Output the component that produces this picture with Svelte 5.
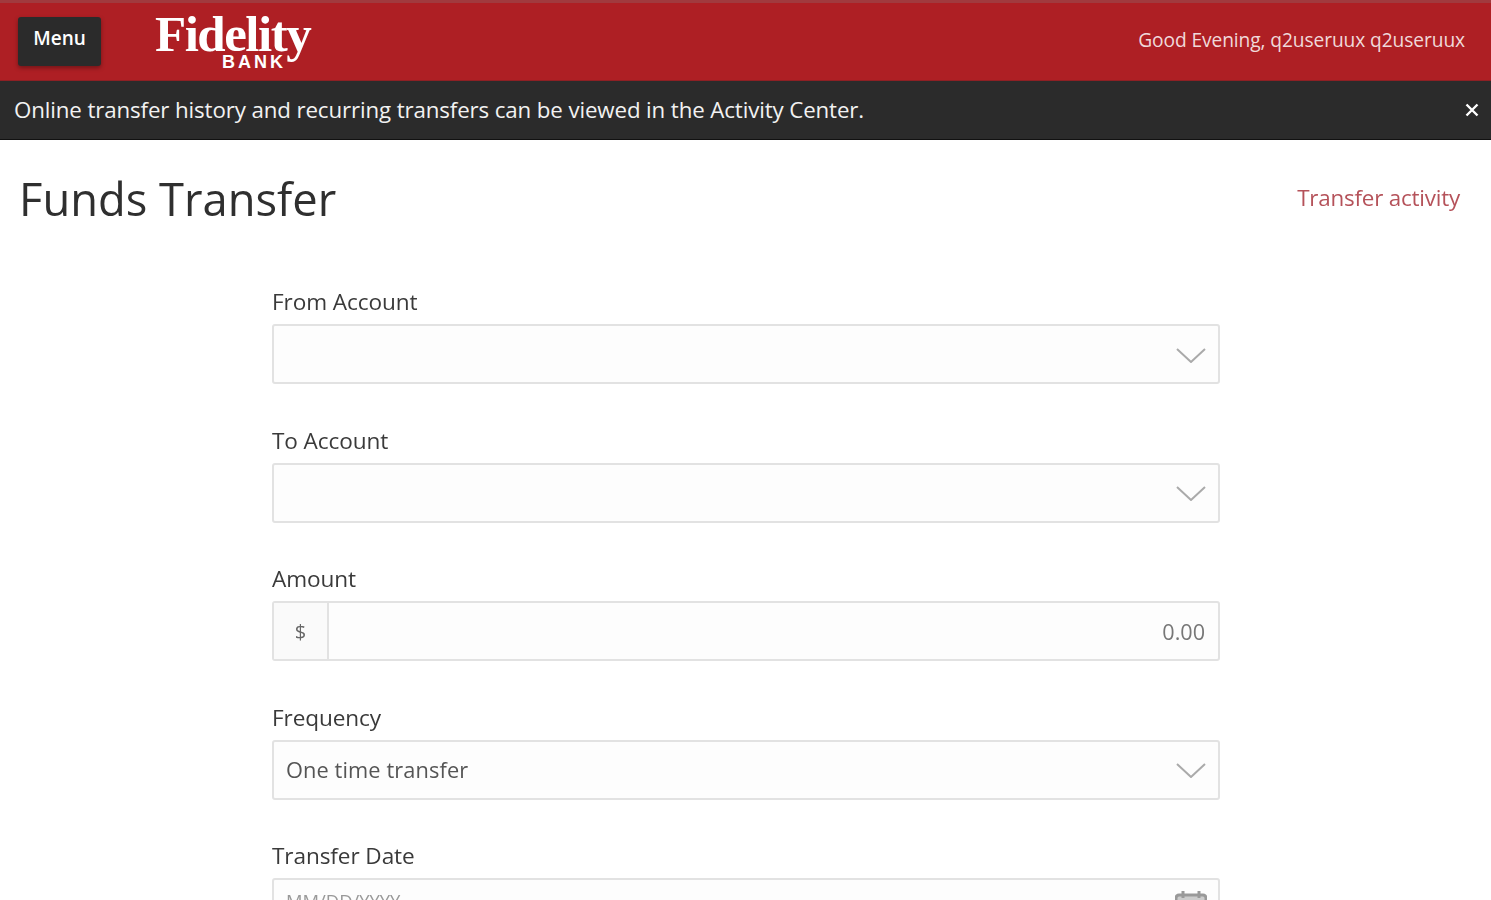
<script>
  const chevron = "M1 1 L15 14 L29 1";
</script>

<div class="page">
  <header class="topbar">
    <div class="left">
      <button class="menu">Menu</button>
      <div class="logo">
        <span class="wordmark">Fidelity</span>
        <span class="bank">BANK</span>
      </div>
    </div>
    <div class="greeting">Good Evening, q2useruux q2useruux</div>
  </header>

  <div class="notice">
    <span class="notice-text">Online transfer history and recurring transfers can be viewed in the Activity Center.</span>
    <svg class="close" viewBox="0 0 14 14" width="14" height="14" aria-label="Close">
      <path d="M1.5 1.5 L12.5 12.5 M12.5 1.5 L1.5 12.5" />
    </svg>
  </div>

  <main class="content">
    <div class="title-row">
      <h1>Funds Transfer</h1>
      <a class="activity" href="#activity">Transfer activity</a>
    </div>

    <form class="form">
      <div class="field">
        <span class="label">From Account</span>
        <div class="control">
          <span class="value"></span>
          <svg class="chev" viewBox="0 0 30 15" width="30" height="15"><path d={chevron} /></svg>
        </div>
      </div>

      <div class="field">
        <span class="label">To Account</span>
        <div class="control">
          <span class="value"></span>
          <svg class="chev" viewBox="0 0 30 15" width="30" height="15"><path d={chevron} /></svg>
        </div>
      </div>

      <div class="field">
        <span class="label">Amount</span>
        <div class="control amount">
          <span class="addon">$</span>
          <span class="number">0.00</span>
        </div>
      </div>

      <div class="field">
        <span class="label">Frequency</span>
        <div class="control">
          <span class="value">One time transfer</span>
          <svg class="chev" viewBox="0 0 30 15" width="30" height="15"><path d={chevron} /></svg>
        </div>
      </div>

      <div class="field">
        <span class="label">Transfer Date</span>
        <div class="control date">
          <span class="value placeholder">MM/DD/YYYY</span>
          <svg class="cal" viewBox="0 0 32 32" width="32" height="32">
            <rect x="1" y="5" width="30" height="26" rx="3" />
            <path d="M8 1 V8 M24 1 V8" />
          </svg>
        </div>
      </div>
    </form>
  </main>
</div>

<style>
  :global(body) {
    margin: 0;
    background: #fff;
    overflow: hidden;
  }

  .page {
    height: 900px;
    overflow: hidden;
    font-family: "Open Sans", "Noto Sans", sans-serif;
    color: #2b2b2b;
    filter: blur(0.6px);
  }

  .topbar {
    box-sizing: border-box;
    height: 81px;
    padding: 0 26px 0 18px;
    display: flex;
    align-items: center;
    justify-content: space-between;
    background: #ae1f24;
    border-top: 3px solid #a13a3e;
    border-bottom: 1px solid #8e2024;
  }

  .left {
    display: flex;
    align-items: center;
    gap: 54px;
  }

  .menu {
    width: 83px;
    height: 49px;
    margin-top: -1px;
    padding: 0 0 7px;
    border: 0;
    border-radius: 3px;
    background: #2b2b2b;
    color: #fff;
    font: 600 19px "Open Sans", sans-serif;
    box-shadow: 0 2px 4px rgba(0, 0, 0, 0.35);
  }

  .logo {
    position: relative;
    width: 158px;
    height: 64px;
    color: #fff;
  }

  .wordmark {
    position: absolute;
    left: 0;
    top: 2px;
    font: 700 51px/44px "Liberation Serif", serif;
    letter-spacing: -1.5px;
    white-space: nowrap;
  }

  .bank {
    position: absolute;
    left: 67px;
    top: 44px;
    font: 700 18px/16px "Liberation Sans", sans-serif;
    letter-spacing: 3px;
  }

  .greeting {
    color: #f0d9da;
    font-size: 19.2px;
    letter-spacing: -0.1px;
    margin-top: -4px;
  }

  .notice {
    box-sizing: border-box;
    height: 59px;
    padding: 0 12px 0 14px;
    display: flex;
    align-items: center;
    justify-content: space-between;
    background: #2b2b2b;
    color: #f2f2f2;
    font-size: 22.3px;
    letter-spacing: -0.12px;
    border-bottom: 1px solid #111;
  }

  .notice-text {
    margin-top: -2px;
  }

  .close {
    fill: none;
    stroke: #fff;
    stroke-width: 2.4;
  }

  .content {
    padding: 0 31px 0 19px;
  }

  .title-row {
    height: 150px;
    display: flex;
    align-items: flex-start;
    justify-content: space-between;
  }

  h1 {
    margin: 28px 0 0;
    font-size: 45.3px;
    line-height: 62px;
    font-weight: 400;
    color: #2f2f2f;
  }

  .activity {
    margin-top: 42px;
    color: #b5525a;
    font-size: 22.4px;
    line-height: 32px;
    text-decoration: none;
    letter-spacing: -0.2px;
  }

  .form {
    width: 948px;
    margin-left: 253px;
    padding-top: 2px;
    display: flex;
    flex-direction: column;
    gap: 46.6px;
  }

  .field {
    display: flex;
    flex-direction: column;
  }

  .label {
    height: 35px;
    font-size: 22.6px;
    line-height: 26px;
    color: #3a3a3a;
    margin-top: -3px;
    letter-spacing: -0.1px;
  }

  .control {
    box-sizing: border-box;
    height: 60px;
    padding: 0 14px 0 12px;
    display: flex;
    align-items: center;
    justify-content: space-between;
    background: #fdfdfd;
    border: 2px solid #e2e2e2;
    border-radius: 3px;
  }

  .value {
    font-size: 21.8px;
    color: #555;
    letter-spacing: 0.1px;
  }

  .chev {
    fill: none;
    stroke: #aaa;
    stroke-width: 2;
    margin-top: 2px;
    margin-right: -2px;
  }

  .amount {
    padding: 0 13px 0 0;
  }

  .addon {
    box-sizing: border-box;
    width: 55px;
    height: 100%;
    display: flex;
    align-items: center;
    justify-content: center;
    border-right: 2px solid #e2e2e2;
    background: #fafafa;
    color: #666;
    font-size: 20px;
  }

  .number {
    color: #777;
    font-size: 21.6px;
  }

  .date {
    align-items: flex-start;
    padding-top: 9px;
  }

  .placeholder {
    color: #999;
    font-size: 18.4px;
    letter-spacing: 0;
    line-height: 30px;
    margin-top: -3px;
  }

  .cal {
    fill: #ccc;
    stroke: #999;
    stroke-width: 3;
    margin-top: 1px;
    margin-right: -3px;
  }
</style>
